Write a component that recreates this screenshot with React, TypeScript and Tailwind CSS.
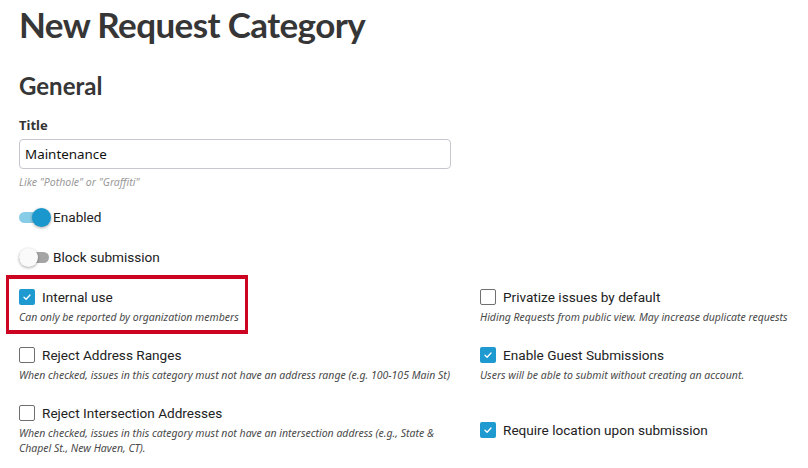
import React from "react";

const Check = ({ checked }: { checked: boolean }) =>
  checked ? (
    <span className="flex h-[16px] w-[16px] shrink-0 items-center justify-center rounded-[2px] bg-[#1e9ad0]">
      <svg width="10" height="10" viewBox="0 0 10 10" fill="none">
        <path d="M2 5.2 L4.1 7.2 L8 3" stroke="white" strokeWidth="1.3" strokeLinecap="round" strokeLinejoin="round" />
      </svg>
    </span>
  ) : (
    <span className="h-[16px] w-[16px] shrink-0 rounded-[2px] border-[1.5px] border-[#6f6f6f] bg-white" />
  );

const Item = ({
  checked,
  label,
  help,
  className = "",
  children,
}: {
  checked: boolean;
  label: string;
  help?: string;
  className?: string;
  children?: React.ReactNode;
}) => (
  <div className={"relative " + className}>
    {children}
    <div className="flex h-[20px] items-center gap-[7px]">
      <Check checked={checked} />
      <span className="font-['Roboto'] text-[13.6px] text-[#222]">{label}</span>
    </div>
    {help && (
      <p className="mt-[3px] font-['Noto_Sans'] text-[10.5px] italic leading-[15px] text-[#4a4a4a]">{help}</p>
    )}
  </div>
);

const Switch = ({ on, label, className = "" }: { on: boolean; label: string; className?: string }) => (
  <div className={"flex h-[24px] items-center " + className}>
    <div className="relative h-[24px] w-[34px] shrink-0">
      <div
        className={
          "absolute left-0 top-[7px] h-[11px] w-[30px] rounded-full " +
          (on ? "bg-[#88cde8]" : "bg-[#a5a5a5]")
        }
      />
      <div
        className={
          "absolute top-[3px] h-[19px] w-[19px] rounded-full shadow-[0_1px_3px_rgba(0,0,0,0.35)] " +
          (on ? "left-[13px] bg-[#1a97cc]" : "left-0 bg-[#fafafa]")
        }
      />
    </div>
    <span className="font-['Roboto'] text-[13.6px] text-[#222]">{label}</span>
  </div>
);

export default function App() {
  return (
    <div className="h-[468px] w-[808px] overflow-hidden bg-white pl-[19px] font-['Noto_Sans',sans-serif] text-[#333]">
      <h1 className="font-['Lato',sans-serif] text-[35px] font-bold leading-[48px] tracking-[-0.6px] text-[#363636]">New Request Category</h1>
      <h2 className="mt-[22px] font-['Lato',sans-serif] text-[24px] font-bold leading-[32px] text-[#363636]">General</h2>
      <label className="mt-[14px] block text-[13px] font-bold leading-[18px] text-[#333]">Title</label>
      <div className="mt-[5px] flex h-[30px] w-[432px] items-center rounded-[4px] border border-[#c6c6cf] px-[5px] text-[13.4px] text-[#111]">
        Maintenance
      </div>
      <p className="mt-[5px] text-[10.5px] italic leading-[16px] text-[#9a9a9a]">Like "Pothole" or "Graffiti"</p>
      <Switch on className="mt-[15px]" label="Enabled" />
      <Switch on={false} className="mt-[16px]" label="Block submission" />
      <div className="mt-[18px] flex">
        <div className="w-[461px] shrink-0">
          <Item checked label="Internal use" help="Can only be reported by organization members">
            <div className="pointer-events-none absolute -bottom-[9px] -left-[13px] -top-[12px] w-[242px] border-x-[3px] border-y-[4px] border-[#cc0422]" />
          </Item>
          <Item
            className="mt-[20px]"
            checked={false}
            label="Reject Address Ranges"
            help="When checked, issues in this category must not have an address range (e.g. 100-105 Main St)"
          />
          <Item
            className="mt-[20px] w-[440px]"
            checked={false}
            label="Reject Intersection Addresses"
            help="When checked, issues in this category must not have an intersection address (e.g., State & Chapel St., New Haven, CT)."
          />
        </div>
        <div className="flex-1">
          <Item
            checked={false}
            label="Privatize issues by default"
            help="Hiding Requests from public view. May increase duplicate requests"
          />
          <Item
            className="mt-[20px]"
            checked
            label="Enable Guest Submissions"
            help="Users will be able to submit without creating an account."
          />
          <Item className="mt-[37px]" checked label="Require location upon submission" />
        </div>
      </div>
    </div>
  );
}
